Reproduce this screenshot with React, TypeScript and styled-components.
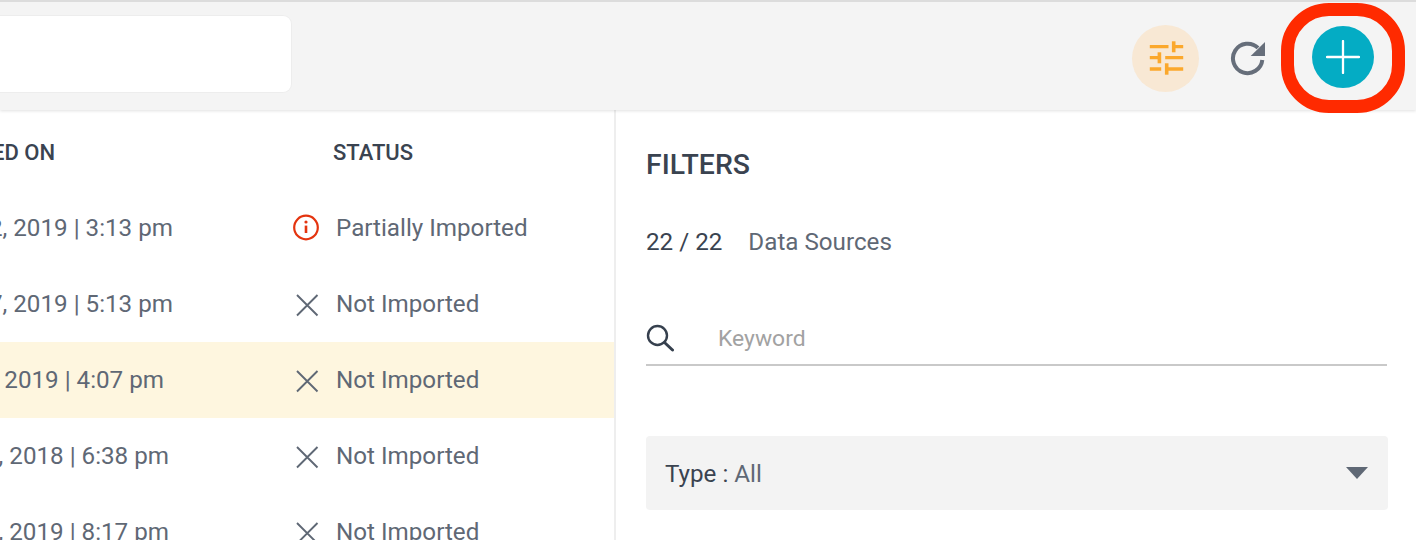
import React from "react";
import styled, { createGlobalStyle } from "styled-components";

const Global = createGlobalStyle`
  html, body { margin: 0; padding: 0; background: #fff; height: 540px; overflow: hidden; }
  body { font-family: Roboto, "Liberation Sans", sans-serif; -webkit-font-smoothing: antialiased; }
  * { box-sizing: border-box; }
`;

const Page = styled.div`
  position: relative;
  width: 1416px;
  height: 540px;
  overflow: hidden;
  border-top: 2px solid #dcdcdc;
`;

const Toolbar = styled.header`
  height: 108px;
  background: #f4f4f4;
  box-shadow: 0 1px 3px rgba(0, 0, 0, 0.12);
  display: flex;
  align-items: center;
  justify-content: space-between;
  position: relative;
`;

const SearchBox = styled.div`
  width: 292px;
  height: 78px;
  margin-bottom: 4px;
  background: #fff;
  border: 1px solid #ededed;
  border-left: 0;
  border-radius: 0 9px 9px 0;
`;

const Actions = styled.div`
  display: flex;
  align-items: center;
  margin: 2px 42px 0 0;
`;

const FilterButton = styled.button`
  width: 67px;
  height: 67px;
  border: 0;
  padding: 0;
  border-radius: 50%;
  background: #f8e8d4;
  display: flex;
  align-items: center;
  justify-content: center;
  margin-top: 2px;
`;

const RefreshButton = styled.button`
  width: 38px;
  height: 38px;
  border: 0;
  padding: 0;
  background: none;
  margin: 2px 0 0 31px;
  display: flex;
`;

const AddButton = styled.button`
  width: 62px;
  height: 62px;
  border: 0;
  padding: 0;
  border-radius: 50%;
  background: #04acc4;
  margin-left: 44px;
  display: flex;
  align-items: center;
  justify-content: center;
`;

const Highlight = styled.div`
  position: absolute;
  left: 1281px;
  top: 1px;
  width: 124px;
  height: 110px;
  border: 13px solid #ff2a00;
  border-radius: 48px;
`;

const Main = styled.main`
  display: flex;
  height: 430px;
`;

const ListPane = styled.section`
  width: 616px;
  flex: none;
  border-right: 2px solid #eeeeee;
  overflow: hidden;
`;

const HeaderRow = styled.div`
  display: flex;
  align-items: center;
  height: 80px;
  padding-top: 4px;
  font-size: 22px;
  font-weight: 500;
  color: #3a4350;
`;

const HeadDate = styled.div`
  width: 423px;
  flex: none;
  margin-left: -90px;
  padding-right: 278px;
  text-align: right;
  white-space: nowrap;
`;

const Row = styled.div<{ $active?: boolean }>`
  display: flex;
  align-items: center;
  height: 76px;
  background: ${(p) => (p.$active ? "#fef6df" : "transparent")};
  color: #5f6875;
  font-size: 24.2px;
`;

const DateCell = styled.div<{ $end: number }>`
  width: 292px;
  flex: none;
  display: flex;
  justify-content: flex-end;
  padding-right: ${(p) => 292 - p.$end}px;
  white-space: nowrap;
`;

const StatusCell = styled.div`
  display: flex;
  align-items: center;
  gap: 15px;
  white-space: nowrap;
`;

const StatusIcon = styled.svg`
  width: 29px;
  height: 29px;
  flex: none;
`;

const FilterPane = styled.aside`
  flex: 1;
  padding: 0 28px 0 30px;
`;

const FilterTitle = styled.h2`
  margin: 0;
  padding-top: 39px;
  font-size: 28.4px;
  line-height: 32px;
  font-weight: 500;
  color: #3a4350;
`;

const Counter = styled.div`
  display: flex;
  gap: 26px;
  margin-top: 47px;
  font-size: 24.2px;
  line-height: 28px;
  color: #5f6875;
`;

const CounterValue = styled.span`
  color: #3a4350;
`;

const KeywordField = styled.div`
  display: flex;
  align-items: center;
  gap: 44px;
  height: 54px;
  margin: 56px 1px 0 0;
  border-bottom: 2px solid #c9c9c9;
  font-size: 22.9px;
  color: #a2a2a2;
`;

const SelectBox = styled.div`
  display: flex;
  align-items: center;
  justify-content: space-between;
  height: 74px;
  margin-top: 70px;
  padding: 1px 20px 0 19px;
  background: #f3f3f3;
  border-radius: 4px;
  font-size: 24.2px;
  color: #3a4350;
`;

const SelectValue = styled.span`
  color: #5f6875;
`;

const Caret = styled.span`
  width: 0;
  height: 0;
  border-left: 11px solid transparent;
  border-right: 11px solid transparent;
  border-top: 12px solid #5f6875;
  margin-top: -1px;
`;

const rows = [
  { date: "Jan 22, 2019 | 3:13 pm", end: 173, status: "Partially Imported", partial: true },
  { date: "Mar 27, 2019 | 5:13 pm", end: 173, status: "Not Imported" },
  { date: "Feb 4, 2019 | 4:07 pm", end: 164, status: "Not Imported", active: true },
  { date: "Oct 9, 2018 | 6:38 pm", end: 169, status: "Not Imported" },
  { date: "Dec 1, 2019 | 8:17 pm", end: 169, status: "Not Imported" },
];

const PartialIcon = () => (
  <StatusIcon viewBox="0 0 29 29" fill="none">
    <circle cx="14" cy="13.500" r="11.800" stroke="#e4340f" strokeWidth="2.200" />
    <path d="M14 11.600v7.400" stroke="#e4340f" strokeWidth="2.600" />
    <circle cx="14" cy="8" r="1.600" fill="#e4340f" />
  </StatusIcon>
);

const CrossIcon = () => (
  <StatusIcon viewBox="0 0 29 29" fill="none">
    <path d="M5 5l20.500 20.500M25.500 5L5 25.500" stroke="#5f6875" strokeWidth="1.900" />
  </StatusIcon>
);

export default function App() {
  return (
    <Page>
      <Global />
      <Toolbar>
        <SearchBox />
        <Actions>
          <FilterButton aria-label="Filters">
            <svg width="36" height="36" viewBox="0 0 36 36" fill="none" stroke="#fba82c" strokeWidth="3.300">
              <path d="M1.800 6.700h18.700M25.700 6.700h9.500" />
              <path d="M25.700 1.300v11" strokeWidth="3.600" />
              <path d="M1.800 17.700h9.600M17.200 17.700h18" />
              <path d="M11.400 12.300v11" strokeWidth="3.600" />
              <path d="M1.800 29h11.400M18.700 29h16.500" />
              <path d="M18.700 23.300v11.400" strokeWidth="3.600" />
            </svg>
          </FilterButton>
          <RefreshButton aria-label="Refresh">
            <svg width="38" height="38" viewBox="0 0 38 38" fill="none">
              <path d="M28 8.900A14.700 14.700 0 1 0 32.300 21" stroke="#666e7a" strokeWidth="4" />
              <path d="M35 3v14H20.700z" fill="#666e7a" />
            </svg>
          </RefreshButton>
          <AddButton aria-label="Add">
            <svg width="34" height="34" viewBox="0 0 34 34" stroke="#fff" strokeWidth="2.300" strokeLinecap="round">
              <path d="M17 1v32M1 17h32" />
            </svg>
          </AddButton>
        </Actions>
      </Toolbar>
      <Highlight />
      <Main>
        <ListPane>
          <HeaderRow>
            <HeadDate>IMPORTED ON</HeadDate>
            <span>STATUS</span>
          </HeaderRow>
          {rows.map((r) => (
            <Row key={r.date} $active={r.active}>
              <DateCell $end={r.end}>{r.date}</DateCell>
              <StatusCell>
                {r.partial ? <PartialIcon /> : <CrossIcon />}
                {r.status}
              </StatusCell>
            </Row>
          ))}
        </ListPane>
        <FilterPane>
          <FilterTitle>FILTERS</FilterTitle>
          <Counter>
            <CounterValue>22 / 22</CounterValue>
            <span>Data Sources</span>
          </Counter>
          <KeywordField>
            <svg width="28" height="28" viewBox="0 0 28 28" fill="none" stroke="#36404e" strokeWidth="2.400" strokeLinecap="round">
              <circle cx="11.500" cy="11.500" r="9.500" />
              <path d="M18.500 18.500l8 7.500" strokeWidth="3" />
            </svg>
            Keyword
          </KeywordField>
          <SelectBox>
            <span>
              Type : <SelectValue>All</SelectValue>
            </span>
            <Caret />
          </SelectBox>
        </FilterPane>
      </Main>
    </Page>
  );
}
